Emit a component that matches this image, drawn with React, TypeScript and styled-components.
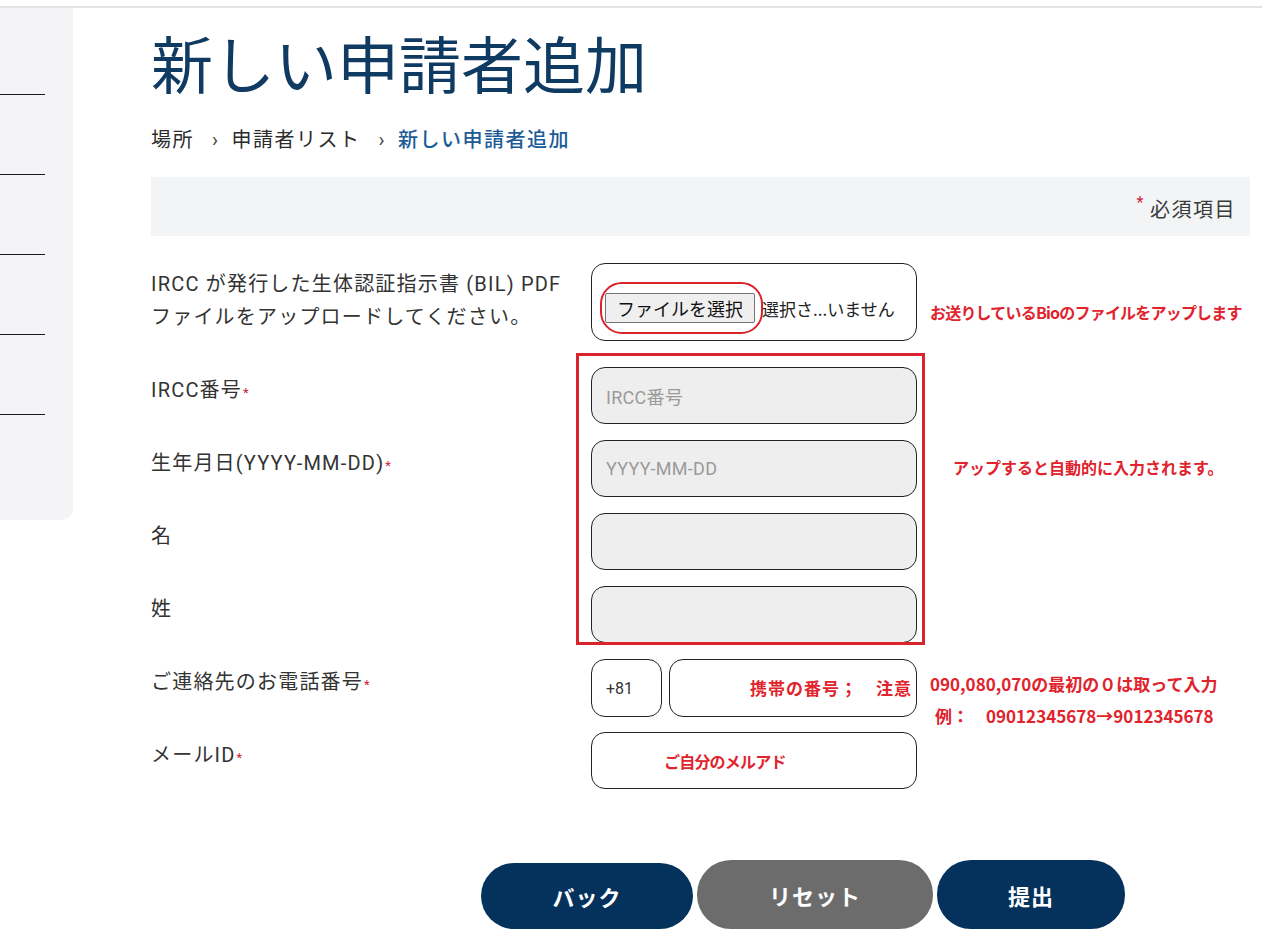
import React from 'react';
import styled, { createGlobalStyle } from 'styled-components';

const GlobalStyle = createGlobalStyle`
  html, body {
    margin: 0;
    padding: 0;
    background: #ffffff;
  }
  body {
    font-family: Roboto, "Noto Sans CJK JP", sans-serif;
    color: #333333;
  }
  * {
    box-sizing: border-box;
  }
`;

const sideItems = [0, 1, 2, 3, 4];

const crumbs = ['場所', '申請者リスト'];

type Row = {
  label: string;
  required?: boolean;
  placeholder?: string;
};

const autoRows: Row[] = [
  { label: 'IRCC番号', required: true, placeholder: 'IRCC番号' },
  { label: '生年月日(YYYY-MM-DD)', required: true, placeholder: 'YYYY-MM-DD' },
  { label: '名' },
  { label: '姓' },
];

const App = () => {
  return (
    <Page>
      <GlobalStyle />
      <TopLine />
      <Body>
        <SideTab>
          {sideItems.map((i) => (
            <SideItem key={i} />
          ))}
        </SideTab>
        <Main>
          <Title>新しい申請者追加</Title>
          <Breadcrumb>
            {crumbs.map((c) => (
              <React.Fragment key={c}>
                <Crumb>{c}</Crumb>
                <Sep>›</Sep>
              </React.Fragment>
            ))}
            <Crumb $active>新しい申請者追加</Crumb>
          </Breadcrumb>
          <InfoBar>
            <Star>*</Star>
            必須項目
          </InfoBar>

          <Form>
            <Label $row={1} $top={5}>
              IRCC が発行した生体認証指示書 (BIL) PDF
              <br />
              ファイルをアップロードしてください。
            </Label>
            <FileBox $row={1}>
              <Circled>
                <FileButton type="button">ファイルを選択</FileButton>
              </Circled>
              <FileName>選択さ...いません</FileName>
            </FileBox>
            <Note $row={1} $left={13} $shift={10} $spacing={-0.8}>
              お送りしているBioのファイルをアップします
            </Note>

            {autoRows.map((r, i) => (
              <React.Fragment key={r.label}>
                <Label $row={i + 2}>
                  {r.label}
                  {r.required && <Req>*</Req>}
                </Label>
                <Field $row={i + 2} $filled>
                  {r.placeholder && <Placeholder>{r.placeholder}</Placeholder>}
                </Field>
              </React.Fragment>
            ))}
            <Note $row={3} $left={36} $shift={-4} $spacing={0}>
              アップすると自動的に入力されます。
            </Note>
            <Frame />

            <Label $row={6}>
              ご連絡先のお電話番号<Req>*</Req>
            </Label>
            <PhoneWrap $row={6}>
              <CodeBox>+81</CodeBox>
              <PhoneBox>
                <InnerNote $size={17} $spacing={1}>携帯の番号；　注意</InnerNote>
              </PhoneBox>
            </PhoneWrap>
            <NoteStack $row={6}>
              <NoteLine $left={13}>090,080,070の最初の０は取って入力</NoteLine>
              <NoteLine $left={18}>例：　09012345678→9012345678</NoteLine>
            </NoteStack>

            <Label $row={7}>
              メールID<Req>*</Req>
            </Label>
            <Field $row={7}>
              <MailNote $size={16} $spacing={-0.8}>ご自分のメルアド</MailNote>
            </Field>
          </Form>

          <Actions>
            <ActionButton $w={212} $h={66} type="button">バック</ActionButton>
            <ActionButton $w={236} $h={69} $gray type="button">リセット</ActionButton>
            <ActionButton $w={188} $h={69} type="button">提出</ActionButton>
          </Actions>
        </Main>
      </Body>
    </Page>
  );
};

const Page = styled.div`
  width: 1262px;
  min-height: 947px;
  display: flex;
  flex-direction: column;
`;

const TopLine = styled.div`
  height: 8px;
  border-bottom: 2px solid #e3e4e6;
`;

const Body = styled.div`
  display: flex;
  align-items: flex-start;
`;

const SideTab = styled.div`
  width: 73px;
  height: 512px;
  flex-shrink: 0;
  background: #f4f4f6;
  border-bottom-right-radius: 12px;
  padding-top: 7px;
`;

const SideItem = styled.div`
  width: 45px;
  height: 80px;
  border-bottom: 1px solid #1a1a1a;
`;

const Main = styled.div`
  flex: 1;
  padding: 17px 12px 0 78px;
`;

const Title = styled.h1`
  margin: 0;
  font-family: "Noto Sans CJK JP", sans-serif;
  font-size: 62px;
  line-height: 74px;
  font-weight: 400;
  color: #0f3a62;
`;

const Breadcrumb = styled.div`
  margin-top: 26px;
  display: flex;
  align-items: center;
  font-size: 20px;
  line-height: 30px;
  letter-spacing: 1.5px;
`;

const Crumb = styled.span<{ $active?: boolean }>`
  color: ${({ $active }) => ($active ? '#1b5b98' : '#2b2b2b')};
  font-weight: ${({ $active }) => ($active ? 500 : 400)};
`;

const Sep = styled.span`
  margin: 0 12px 0 18px;
  font-size: 20px;
  color: #444;
`;

const InfoBar = styled.div`
  margin-top: 22px;
  height: 59px;
  background: #f3f4f6;
  display: flex;
  align-items: center;
  justify-content: flex-end;
  padding: 4px 14px 0 0;
  font-size: 20px;
  letter-spacing: 1.5px;
  color: #3a3a3a;
`;

const Star = styled.span`
  color: #c8243a;
  font-size: 16px;
  align-self: flex-start;
  margin: 12px 5px 0 0;
`;

const Form = styled.div`
  margin-top: 27px;
  display: grid;
  grid-template-columns: 440px 326px 1fr;
  grid-template-rows: 88px repeat(6, 57px);
  row-gap: 16px;
`;

const Label = styled.div<{ $row: number; $top?: number }>`
  grid-column: 1;
  grid-row: ${({ $row }) => $row};
  padding-top: ${({ $top }) => ($top ?? 10)}px;
  font-size: 20px;
  letter-spacing: 1.2px;
  line-height: ${({ $top }) => ($top ? 33 : 27)}px;
  color: #333333;
`;

const Req = styled.span`
  color: #c8243a;
  font-size: 13px;
  margin-left: 1px;
`;

const Field = styled.div<{ $row: number; $filled?: boolean }>`
  grid-column: 2;
  grid-row: ${({ $row }) => $row};
  height: 57px;
  border: 1px solid #222;
  border-radius: 14px;
  background: ${({ $filled }) => ($filled ? '#eeeeee' : '#ffffff')};
  display: flex;
  align-items: center;
  padding-left: 14px;
`;

const FileBox = styled(Field)`
  height: 78px;
  align-self: start;
  padding: 12px 0 0 8px;
`;

const Circled = styled.div`
  display: inline-flex;
  padding: 9px 6px 9px 3px;
  border: 2px solid #d9232d;
  border-radius: 22px;
  margin-right: -1px;
`;

const FileButton = styled.button`
  width: 150px;
  height: 30px;
  padding: 0;
  background: #efefef;
  border: 1px solid #767676;
  border-radius: 2px;
  font-family: "Noto Sans CJK JP", sans-serif;
  font-size: 18px;
  color: #111;
`;

const FileName = styled.span`
  font-family: "Noto Sans CJK JP", sans-serif;
  font-size: 17px;
  color: #222;
  white-space: nowrap;
`;

const Placeholder = styled.span`
  font-size: 18px;
  letter-spacing: 0.3px;
  color: #9b9b9b;
`;

const Frame = styled.div`
  grid-column: 2;
  grid-row: 2 / 6;
  margin: -14px -8px -2px -15px;
  border: 3px solid #d9232d;
  pointer-events: none;
`;

const Note = styled.span<{ $row: number; $left: number; $shift: number; $spacing: number }>`
  grid-column: 3;
  grid-row: ${({ $row }) => $row};
  align-self: center;
  margin-left: ${({ $left }) => $left}px;
  margin-top: ${({ $shift }) => $shift}px;
  font-family: "Noto Sans CJK JP", sans-serif;
  font-size: 16px;
  font-weight: 700;
  letter-spacing: ${({ $spacing }) => $spacing}px;
  color: #e0232c;
  white-space: nowrap;
  line-height: 32px;
`;

const NoteStack = styled.div<{ $row: number }>`
  grid-column: 3;
  grid-row: ${({ $row }) => $row};
  align-self: start;
  padding-top: 9px;
  display: flex;
  flex-direction: column;
  align-items: flex-start;
`;

const NoteLine = styled.div<{ $left: number }>`
  margin-left: ${({ $left }) => $left}px;
  font-family: "Noto Sans CJK JP", sans-serif;
  font-size: 17px;
  font-weight: 700;
  color: #e0232c;
  white-space: nowrap;
  line-height: 32px;
`;

const PhoneWrap = styled.div<{ $row: number }>`
  grid-column: 2;
  grid-row: ${({ $row }) => $row};
  display: flex;
  gap: 7px;
`;

const CodeBox = styled.div`
  width: 71px;
  height: 58px;
  border: 1px solid #222;
  border-radius: 14px;
  display: flex;
  align-items: center;
  padding-left: 14px;
  font-size: 16px;
  color: #333;
`;

const PhoneBox = styled.div`
  flex: 1;
  height: 58px;
  border: 1px solid #222;
  border-radius: 14px;
  display: flex;
  align-items: center;
  justify-content: flex-end;
  padding: 0 4px 2px 0;
`;

const InnerNote = styled.span<{ $size: number; $spacing: number }>`
  font-family: "Noto Sans CJK JP", sans-serif;
  font-size: ${({ $size }) => $size}px;
  font-weight: 700;
  letter-spacing: ${({ $spacing }) => $spacing}px;
  color: #e0232c;
  white-space: nowrap;
`;

const MailNote = styled(InnerNote)`
  margin-left: 58px;
`;

const Actions = styled.div`
  margin-top: 71px;
  padding-left: 330px;
  display: flex;
  align-items: flex-end;
  gap: 4px;
`;

const ActionButton = styled.button<{ $w: number; $h: number; $gray?: boolean }>`
  width: ${({ $w }) => $w}px;
  height: ${({ $h }) => $h}px;
  border: none;
  border-radius: 34px;
  background: ${({ $gray }) => ($gray ? '#6c6c6c' : '#05325c')};
  color: #ffffff;
  font-family: "Noto Sans CJK JP", sans-serif;
  font-size: 22px;
  font-weight: 700;
  letter-spacing: 1px;
`;

export default App;
